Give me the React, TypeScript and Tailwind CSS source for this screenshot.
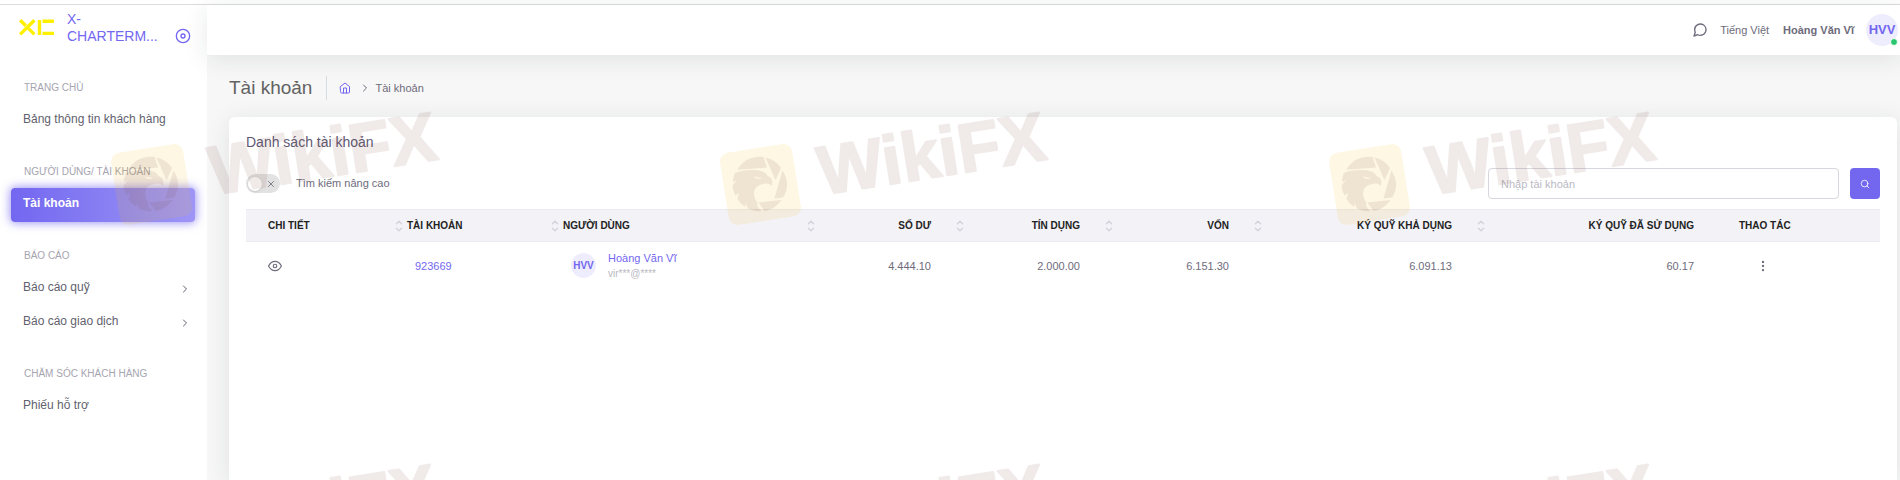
import { clsx } from 'clsx'
import {
    FiChevronRight,
    FiDisc,
    FiEye,
    FiHome,
    FiMessageCircle,
    FiMoreVertical,
    FiSearch,
    FiX,
} from 'react-icons/fi'

type NavItem = { label: string; active?: boolean; expandable?: boolean }
type NavGroup = { title: string; items: NavItem[] }

const NAV: NavGroup[] = [
    { title: 'TRANG CHỦ', items: [{ label: 'Bảng thông tin khách hàng' }] },
    { title: 'NGƯỜI DÙNG/ TÀI KHOẢN', items: [{ label: 'Tài khoản', active: true }] },
    {
        title: 'BÁO CÁO',
        items: [
            { label: 'Báo cáo quỹ', expandable: true },
            { label: 'Báo cáo giao dịch', expandable: true },
        ],
    },
    { title: 'CHĂM SÓC KHÁCH HÀNG', items: [{ label: 'Phiếu hỗ trợ' }] },
]

type Column = { label: string; width: string; numeric?: boolean; sortable?: boolean; pad: string }

const COLUMNS: Column[] = [
    { label: 'CHI TIẾT', width: 'w-[161px]', sortable: true, pad: 'pl-[22px]' },
    { label: 'TÀI KHOẢN', width: 'w-[156px]', sortable: true, pad: 'pl-0' },
    { label: 'NGƯỜI DÙNG', width: 'w-[256px]', sortable: true, pad: 'pl-0' },
    { label: 'SỐ DƯ', width: 'w-[149px]', sortable: true, numeric: true, pad: 'pl-0' },
    { label: 'TÍN DỤNG', width: 'w-[149px]', sortable: true, numeric: true, pad: 'pl-0' },
    { label: 'VỐN', width: 'w-[149px]', sortable: true, numeric: true, pad: 'pl-0' },
    { label: 'KÝ QUỸ KHẢ DỤNG', width: 'w-[223px]', sortable: true, numeric: true, pad: 'pl-0' },
    { label: 'KÝ QUỸ ĐÃ SỬ DỤNG', width: 'w-[242px]', numeric: true, pad: 'pl-0' },
    { label: 'THAO TÁC', width: 'w-[149px]', pad: 'pl-2' },
]

const ACCOUNTS = [
    {
        id: '923669',
        initials: 'HVV',
        name: 'Hoàng Văn Vĩ',
        email: 'vir***@****',
        amounts: ['4.444.10', '2.000.00', '6.151.30', '6.091.13', '60.17'],
    },
]

const Logo = () => (
    <svg viewBox="0 0 36 17" className="mb-1 h-[17px] w-9 shrink-0" fill="none" stroke="#fff000" strokeWidth="3.4">
        <path d="M1.2 1.2 6.8 6.8M9.6 9.6 15.4 15.4M15.4 1.2 1.2 15.4" />
        <path d="M20.5 1v15M23.5 2.2H35M23.5 14.4H35" />
    </svg>
)

const SortIcon = () => (
    <svg
        viewBox="0 0 8 12"
        className="h-3 w-2 shrink-0"
        fill="none"
        stroke="#d3d2da"
        strokeWidth="1.3"
        strokeLinecap="round"
        strokeLinejoin="round"
    >
        <path d="M1.4 3.700 4 1.300 6.600 3.700M1.400 8.300 4 10.700 6.600 8.300" />
    </svg>
)

const Sidebar = () => (
    <aside className="w-[207px] shrink-0 bg-white">
        <div className="flex h-[49px] items-center pl-[19px]">
            <Logo />
            <a href="#home" className="mb-1 ml-3 w-24 text-sm/[17px] text-[#7367f0]">
                X-
                <br />
                CHARTERM...
            </a>
            <button type="button" aria-label="Thu gọn" className="mt-3 ml-3 text-[#7367f0]">
                <FiDisc className="size-4" />
            </button>
        </div>
        <nav>
            {NAV.map((group) => (
                <section key={group.title}>
                    <h2 className="pt-[26px] pb-2 pl-6 text-[10px]/[16px] text-[#a6a4b0]">{group.title}</h2>
                    {group.items.map((item) => (
                        <a
                            key={item.label}
                            href="#nav"
                            className={clsx(
                                'mr-3 ml-[11px] flex h-[34px] items-center justify-between rounded px-3 pb-1 text-xs',
                                item.active
                                    ? 'bg-linear-to-r from-[#7367f0] to-[#9e95f5] font-bold text-white shadow-[0_0_10px_1px_rgba(115,103,240,0.7)]'
                                    : 'text-[#625f6e]',
                            )}
                        >
                            {item.label}
                            {item.expandable && <FiChevronRight className="mt-1 -mr-2 size-3" />}
                        </a>
                    ))}
                </section>
            ))}
        </nav>
    </aside>
)

const TopBar = () => (
    <header className="z-10 flex h-[50px] items-center justify-end bg-white pr-0.5 text-[11px] text-[#6e6b7b] shadow-[0_4px_24px_0_rgba(34,41,47,0.1)]">
        <button type="button" aria-label="Tin nhắn">
            <FiMessageCircle className="size-4" />
        </button>
        <button type="button" className="ml-3">
            Tiếng Việt
        </button>
        <span className="ml-3.5 font-bold">Hoàng Văn Vĩ</span>
        <div className="relative ml-3 flex size-8 items-center justify-center rounded-full bg-[#eeedfd] text-[13px] font-bold text-[#7367f0]">
            HVV
            <span className="absolute right-0 bottom-0 size-2 rounded-full border border-white bg-[#28c76f]" />
        </div>
    </header>
)

const AccountsTable = () => (
    <table className="w-full table-fixed border-collapse text-[11px] text-[#6e6b7b]">
        <thead>
            <tr className="h-8 border-y border-[#ebe9f1] bg-[#f3f2f7] text-[10px] text-[#222]">
                {COLUMNS.map((col) => (
                    <th key={col.label} className={clsx('p-0 font-bold', col.width)}>
                        <div
                            className={clsx(
                                'flex items-center whitespace-nowrap',
                                col.pad,
                                col.sortable ? 'pr-1' : 'pr-[37px]',
                                col.numeric ? 'justify-end gap-[25px]' : 'justify-between',
                            )}
                        >
                            {col.label}
                            {col.sortable && <SortIcon />}
                        </div>
                    </th>
                ))}
            </tr>
        </thead>
        <tbody>
            {ACCOUNTS.map((account) => (
                <tr key={account.id} className="h-12">
                    <td className="pl-[22px]">
                        <button type="button" aria-label="Chi tiết" className="block">
                            <FiEye className="size-3.5" />
                        </button>
                    </td>
                    <td className="pl-2">
                        <a href="#account" className="text-[#7367f0]">
                            {account.id}
                        </a>
                    </td>
                    <td className="pl-2">
                        <div className="flex items-center gap-3">
                            <span className="flex size-[25px] items-center justify-center rounded-full bg-[#eeedfd] text-[10px] font-bold text-[#7367f0]">
                                {account.initials}
                            </span>
                            <div>
                                <a href="#user" className="block leading-4 text-[#7367f0]">
                                    {account.name}
                                </a>
                                <span className="block text-[10px]/[16px] text-[#b9b9c3]">{account.email}</span>
                            </div>
                        </div>
                    </td>
                    {account.amounts.map((amount) => (
                        <td key={amount} className="pr-[37px] text-right">
                            {amount}
                        </td>
                    ))}
                    <td className="pl-[25px]">
                        <button type="button" aria-label="Thao tác" className="block">
                            <FiMoreVertical className="size-3.5" />
                        </button>
                    </td>
                </tr>
            ))}
        </tbody>
    </table>
)

const WatermarkTile = ({ x, y }: { x: number; y: number }) => (
    <g transform={`translate(${x} ${y})`}>
        <rect x="4" y="4" width="73" height="73" rx="9" fill="#f9c52b" opacity="0.13" transform="rotate(-9 40.5 40.5)" />
        <g fill="#7b4a45" opacity="0.11">
            <path d="M17.5 25.8C22 17 32 11.500 43.500 13L47 23.500Z" />
            <path d="M45.500 13.500C52 15 58 19 61 24L55.500 36Z" />
            <path d="M62.500 26.500C68.500 36 68.500 46 63 53.500L54.500 54.500Z" />
            <path d="M38.500 58.500 61.500 56C57 62.500 51 66 44.500 67Z" />
            <path d="M15 29C22 26 32 25.500 39 26.500C44 27.500 46.500 29.500 47.500 32C51.500 33.500 53 36.500 52 42C50 39.500 47.500 39 44 39.800C39 41 35 43 34.200 47.500C33.500 52 35 55.500 37.500 58.500C36.500 61.500 38 64.500 41.500 67C36 68 31 66 28 64.500L25.500 58.500L25.500 63C22 61 19.500 58 17.500 55L19 49L15.500 51.500C13.500 47.500 12.500 44 12.800 41L17 36L13 38C13.200 34.500 13.800 31.500 15 29ZM33.500 32.500C35.500 35 39 35.500 42 34Z" fillRule="evenodd" />
        </g>
        <text
            x="102"
            y="51"
            transform="rotate(-9 102 51)"
            fontFamily="'Liberation Sans', sans-serif"
            fontSize="69"
            fontWeight="bold"
            fill="#7b4a3f"
            stroke="#7b4a3f"
            strokeWidth="2"
            strokeLinejoin="round"
            opacity="0.11"
        >
            WikiFX
        </text>
    </g>
)

const Watermark = () => (
    <svg className="pointer-events-none absolute inset-0 z-20 size-full" aria-hidden="true">
        {[144, 496].map((y) => [111, 720, 1329].map((x) => <WatermarkTile key={`${x}-${y}`} x={x} y={y} />))}
    </svg>
)

export default function App() {
    return (
        <div className="relative flex min-h-screen flex-col overflow-hidden bg-white font-['Liberation_Sans',Arial,sans-serif]">
            <div className="h-[5px] border-b border-[#dcdcdc]" />
            <div className="flex flex-1">
                <Sidebar />
                <div className="flex min-w-0 flex-1 flex-col bg-[#f7f7f7]">
                    <TopBar />
                    <main className="flex flex-1 flex-col pr-[3px] pl-[22px]">
                        <div className="flex h-[62px] items-center pt-1">
                            <h1 className="border-r border-[#d6dce1] pr-3.5 text-[19px]/[24px] text-[#636363]">Tài khoản</h1>
                            <nav className="flex items-center gap-1 pl-3 text-[11px] text-[#6e6b7b]">
                                <a href="#home" aria-label="Trang chủ" className="text-[#7367f0]">
                                    <FiHome className="size-3" />
                                </a>
                                <FiChevronRight className="ml-1 size-3" />
                                <span>Tài khoản</span>
                            </nav>
                        </div>
                        <section className="flex-1 rounded-t-md bg-white px-[17px] pt-4 shadow-[0_4px_24px_0_rgba(34,41,47,0.1)]">
                            <h2 className="text-sm/[18px] text-[#5e5873]">Danh sách tài khoản</h2>
                            <div className="mt-[17px] mb-2.5 flex items-center">
                                <label className="flex cursor-pointer items-center text-[11px] text-[#6e6b7b]">
                                    <input type="checkbox" className="peer sr-only" />
                                    <span className="mr-4 flex h-[19px] w-[34px] items-center justify-between rounded-full bg-[#e2e2e2] pr-1 pl-0.5">
                                        <span className="size-3.5 rounded-full bg-white shadow" />
                                        <FiX className="size-2.5" />
                                    </span>
                                    Tìm kiếm nâng cao
                                </label>
                                <input
                                    type="text"
                                    aria-label="Nhập tài khoản"
                                    placeholder="Nhập tài khoản"
                                    className="ml-auto h-[31px] w-[351px] rounded border border-[#d8d6de] bg-white px-3 text-[11px] placeholder:text-[#b9b9c3]"
                                />
                                <button
                                    type="button"
                                    aria-label="Tìm kiếm"
                                    className="ml-[11px] flex h-[31px] w-[30px] items-center justify-center rounded bg-[#7367f0] text-white"
                                >
                                    <FiSearch className="size-2.5" />
                                </button>
                            </div>
                            <AccountsTable />
                        </section>
                    </main>
                </div>
            </div>
            <Watermark />
        </div>
    )
}
